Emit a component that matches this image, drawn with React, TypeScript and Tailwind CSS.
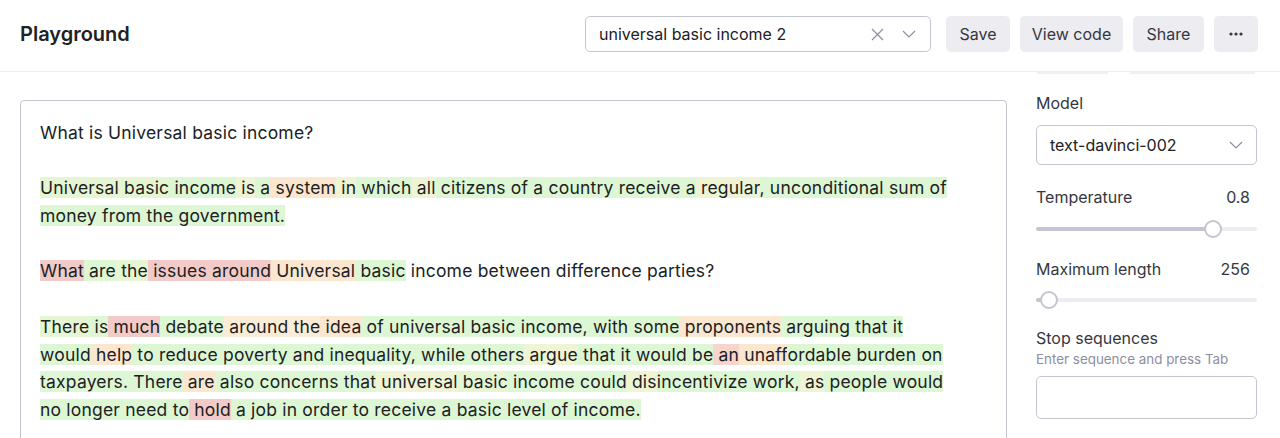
import React from 'react';

type Tok = [string, string?];

// highlight colours by token probability
const HL: Record<string, string> = {
    g: 'bg-[#ddf7d5]',
    l: 'bg-[#e6f5d2]',
    y: 'bg-[#eef4d4]',
    o: 'bg-[#fbe6cf]',
    q: 'bg-[#fbecd8]',
    p: 'bg-[#f6d5cc]',
    r: 'bg-[#f2cac8]',
};

const answer1: Tok[] = [
    ['Universal', 'l'], [' basic', 'l'], [' income', 'g'], [' is', 'y'], [' a', 'g'], [' system', 'o'],
    [' in', 'y'], [' which', 'g'], [' all', 'y'], [' citizens of a country receive a', 'g'], [' regular', 'y'],
    [', unconditional sum of money from the government.', 'g'],
];

const question2: Tok[] = [
    ['What', 'r'], [' are', 'g'], [' the', 'l'], [' issues around', 'r'], [' Universal', 'o'], [' basic', 'g'],
    [' income between difference parties?'],
];

const answer2: Tok[] = [
    ['There', 'l'], [' is', 'g'], [' much', 'r'], [' debate', 'g'], [' around the', 'q'], [' idea', 'o'], [' of', 'g'],
    [' universal basic income, with some', 'g'], [' proponents', 'o'], [' arguing that it would', 'g'], [' help', 'o'],
    [' to reduce poverty and inequality, while others', 'g'], [' argue', 'y'], [' that it would be', 'g'], [' an', 'p'],
    [' unaff', 'o'], ['ordable burden on taxpayers. There', 'g'], [' are', 'o'], [' also concerns that', 'g'],
    [' universal', 'y'], [' basic', 'l'], [' income could', 'g'], [' dis', 'y'], ['incentivize work,', 'g'], [' as', 'y'],
    [' people would no longer need to', 'g'], [' hold', 'r'], [' a job in order to receive a basic level of income.', 'g'],
];

const Para: React.FC<{ toks: Tok[] }> = ({ toks }) => (
    <p>
        {toks.map(([t, c], i) => (
            <span key={i} className={c ? HL[c] : ''}>{t}</span>
        ))}
    </p>
);

const Chevron = ({ className = '' }: { className?: string }) => (
    <svg width="14" height="8" viewBox="0 0 14 8" fill="none" className={className}>
        <path d="M1 1l6 6 6-6" stroke="#8e8ea0" strokeWidth="1.2" />
    </svg>
);

const Slider: React.FC<{ pct: number }> = ({ pct }) => (
    <div className="relative h-[18px] flex items-center">
        <div className="h-1 w-full rounded-full bg-[#ececf1]">
            <div className="h-1 rounded-full bg-[#c5c5d2]" style={{ width: `${pct}%` }} />
        </div>
        <div
            className="absolute top-0 w-[18px] h-[18px] -ml-[9px] rounded-full border-2 border-[#c5c5d2] bg-white"
            style={{ left: `${pct}%` }}
        />
    </div>
);

export default function App() {
    return (
        <div className="h-[438px] overflow-hidden bg-white text-[#353740] font-['Inter',sans-serif]">
            <header className="h-[72px] flex items-center pl-5 pr-[22px] pb-[3px] border-b border-[#ececf1]">
                <h1 className="text-[20px] font-semibold text-[#202123]">Playground</h1>
                <div className="ml-auto flex items-center gap-[10px]">
                    <div className="w-[346px] h-9 mr-[5px] flex items-center pl-[13px] pr-[14px] border border-[#c5c5d2] rounded-[5px]">
                        <span className="flex-1 text-[16px] text-[#202123]">universal basic income 2</span>
                        <svg width="13" height="13" viewBox="0 0 13 13" className="mr-[18px]">
                            <path d="M1 1l11 11M12 1L1 12" stroke="#8e8ea0" strokeWidth="1.2" />
                        </svg>
                        <Chevron />
                    </div>
                    <button className="w-[64px] h-9 rounded-[5px] bg-[#ececf1] text-[16px]">Save</button>
                    <button className="w-[103px] h-9 rounded-[5px] bg-[#ececf1] text-[16px]">View code</button>
                    <button className="w-[71px] h-9 rounded-[5px] bg-[#ececf1] text-[16px]">Share</button>
                    <button className="w-[44px] h-9 rounded-[5px] bg-[#ececf1] flex items-center justify-center">
                        <svg width="14" height="4" viewBox="0 0 14 4">
                            <circle cx="2" cy="2" r="1.6" fill="#353740" />
                            <circle cx="7" cy="2" r="1.6" fill="#353740" />
                            <circle cx="12" cy="2" r="1.6" fill="#353740" />
                        </svg>
                    </button>
                </div>
            </header>

            <div className="flex items-start pl-5 pr-[23px] gap-[29px]">
                <div className="flex-1 mt-7 h-[400px] border border-[#c5c5d2] rounded-[4px] pl-[19px] pt-[18px]">
                    <div className="max-w-[915px] text-[17.5px] tracking-[0.2px] leading-[27.7px] text-[#202123] flex flex-col gap-[27.7px]">
                        <p>What is Universal basic income?</p>
                        <Para toks={answer1} />
                        <Para toks={question2} />
                        <Para toks={answer2} />
                    </div>
                </div>

                <aside className="w-[221px] flex flex-col">
                    <div className="flex h-[2px]">
                        <div className="ml-px w-[71px] bg-[#f0f0f4]" />
                        <div className="ml-[22px] w-[125px] bg-[#f0f0f4]" />
                    </div>
                    <label className="mt-[19px] text-[16px] leading-5">Model</label>
                    <div className="mt-3 h-10 flex items-center px-[13px] border border-[#c5c5d2] rounded-[5px]">
                        <span className="flex-1 text-[16px] text-[#202123]">text-davinci-002</span>
                        <Chevron />
                    </div>
                    <div className="mt-[22px] flex justify-between text-[16px] leading-5 pr-[7px]">
                        <span>Temperature</span>
                        <span>0.8</span>
                    </div>
                    <div className="mt-[13px]">
                        <Slider pct={80} />
                    </div>
                    <div className="mt-[21px] flex justify-between text-[16px] leading-5 pr-[7px]">
                        <span>Maximum length</span>
                        <span>256</span>
                    </div>
                    <div className="mt-3">
                        <Slider pct={6} />
                    </div>
                    <label className="mt-[19px] text-[16px] leading-5">Stop sequences</label>
                    <span className="mt-[3px] text-[13.4px] leading-4 text-[#8e8ea0]">Enter sequence and press Tab</span>
                    <div className="mt-[9px] h-[43px] border border-[#c5c5d2] rounded-[5px]" />
                </aside>
            </div>
        </div>
    );
}
